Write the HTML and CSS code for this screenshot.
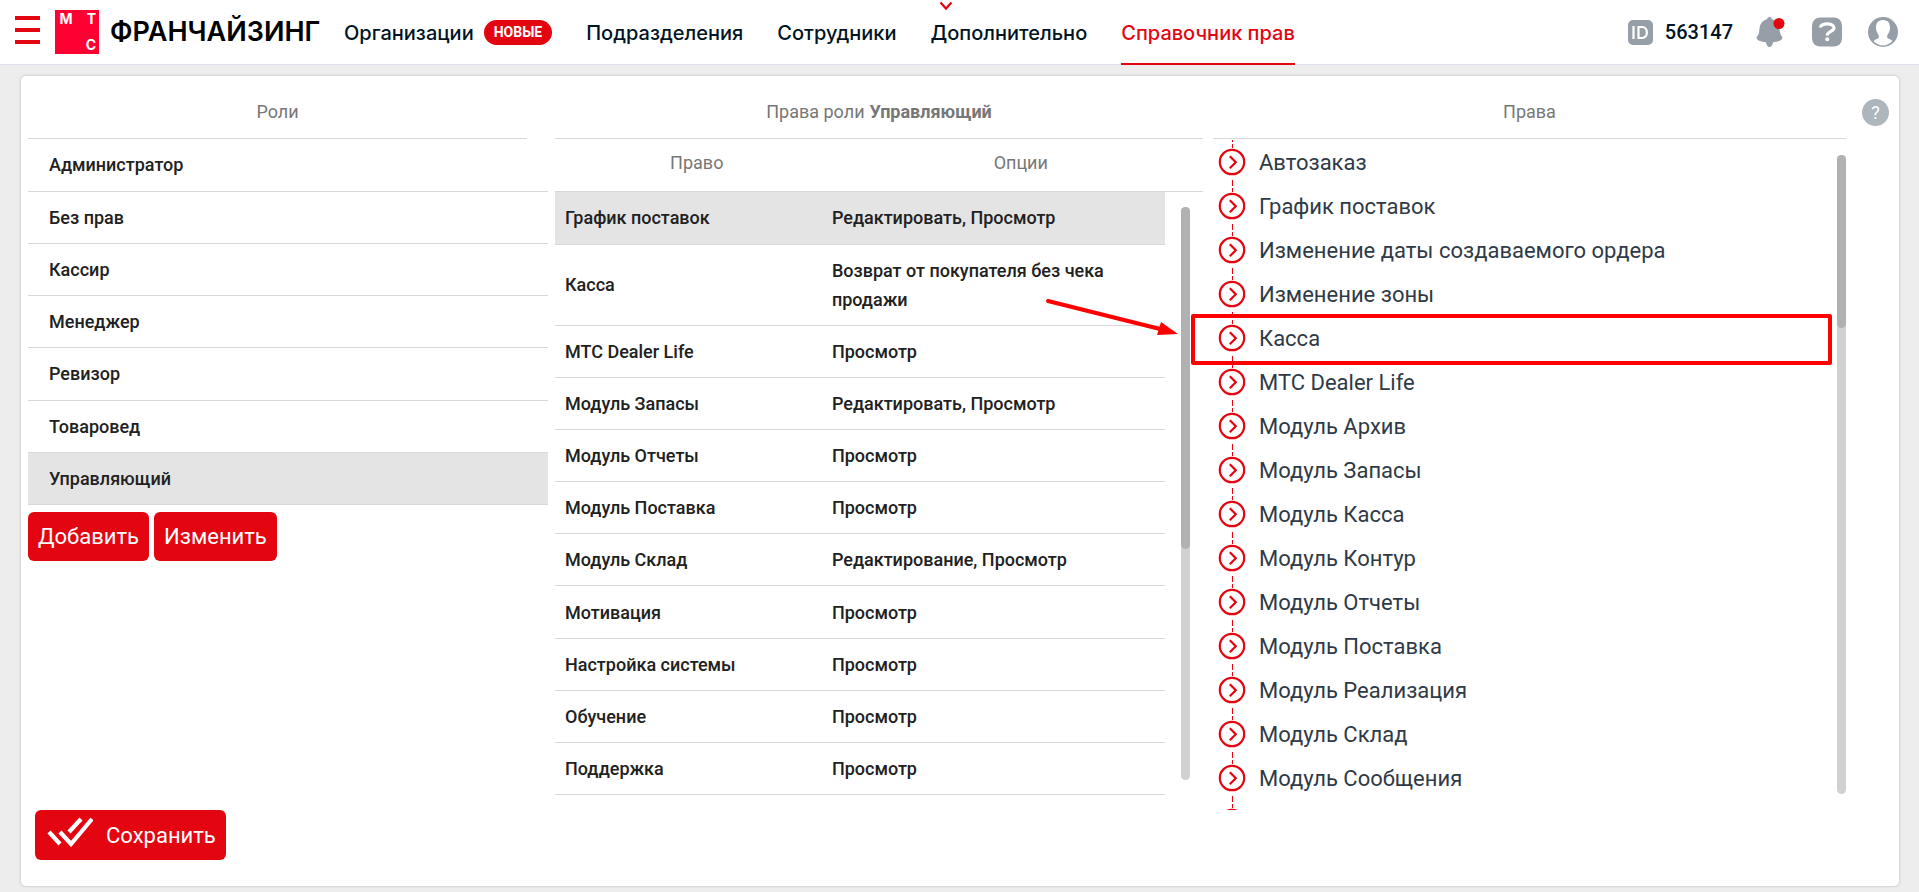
FILE: index.html
```html
<!DOCTYPE html>
<html lang="ru">
<head>
<meta charset="utf-8">
<title>Справочник прав</title>
<link rel="stylesheet" href="styles.css">
</head>
<body>
<svg class="sprite" width="0" height="0" aria-hidden="true">
  <symbol id="node" viewBox="0 0 28 44">
    <path fill="#e30611" d="M14 0h1v2h-1zM14 4h1v4h-1zM14 40h1v4h-1z"/>
    <circle cx="14" cy="22" r="12.2" fill="#fff" stroke="#e30611" stroke-width="2.2"/>
    <path d="M11.8 16.3l6 6-6 6" fill="none" stroke="#e30611" stroke-width="2.2"/>
  </symbol>
</svg>

<header class="topbar">
  <button class="menu" aria-label="Меню"><span></span><span></span><span></span></button>
  <a class="brand" href="#">
    <span class="logo"><span>М</span><span>Т</span><span></span><span>С</span></span>
    <span class="brand-name">ФРАНЧАЙЗИНГ</span>
  </a>
  <nav class="nav">
    <a href="#">Организации <span class="badge">НОВЫЕ</span></a>
    <a href="#">Подразделения</a>
    <a href="#">Сотрудники</a>
    <a href="#" class="more">Дополнительно
      <svg class="caret" width="14" height="10" viewBox="0 0 14 10"><path d="M1.5 1.5L7 7.5l5.500-6" fill="none" stroke="#e30611" stroke-width="2.200"/></svg>
    </a>
    <a href="#" class="current">Справочник прав</a>
  </nav>
  <div class="tools">
    <span class="user-id">
      <svg width="25" height="25" viewBox="0 0 25 25"><rect width="25" height="25" rx="5" fill="#969fa8"/><path d="M5.500 6v13M10.500 7h3.500c6.500 0 6.500 11 0 11h-3.500z" fill="none" stroke="#fff" stroke-width="2.200"/></svg>
      563147
    </span>
    <button aria-label="Уведомления">
      <svg width="30" height="30" viewBox="0 0 30 30"><path d="M13.500 0c1.500 0 2.400 1 2.400 2.300 4.600 1.200 7.100 4.700 7.600 9.200.4 4 .6 6 2.800 8.500.5 1.800-.8 3-2.600 3.700-2 .8-4.200 1.200-6.700 1.500-.2 2.500-1.500 4.800-3.500 4.800s-3.300-2.300-3.500-4.800c-2.500-.3-4.700-.7-6.700-1.500-1.800-.7-3.100-1.900-2.600-3.700 2.200-2.500 2.400-4.500 2.800-8.500.5-4.500 3-8 7.600-9.200C11.100 1 12 0 13.500 0z" fill="#969fa8"/><circle cx="23" cy="6.500" r="5.500" fill="#e30611"/></svg>
    </button>
    <button aria-label="Справка">
      <svg width="30" height="30" viewBox="0 0 30 30"><rect y="0.500" width="30" height="29" rx="8" fill="#969fa8"/><path d="M8.500 10.500c0-5 13.500-5 13.500.3 0 4.200-6.700 3-6.700 7.700" fill="none" stroke="#fff" stroke-width="3.200"/><circle cx="15.300" cy="22.300" r="2" fill="#fff"/></svg>
    </button>
    <button aria-label="Профиль">
      <svg width="30" height="30" viewBox="0 0 30 30"><circle cx="15" cy="15" r="15" fill="#969fa8"/><path d="M15 3c5 0 7.200 3.600 7 8-.1 3-1.200 5-2.400 6.700-.7 1.200-.7 3 .2 3.600 1.600 1 4 1.200 4.600 3C21.500 27 18.500 28.500 15 28.500S8.500 27 5.600 24.300c.6-1.800 3-2 4.600-3 .9-.6.900-2.400.2-3.600C9.200 16 8.100 14 8 11c-.2-4.400 2-8 7-8z" fill="#fff"/></svg>
    </button>
  </div>
</header>

<main class="card">
  <div class="columns">
    <section class="roles">
      <h2>Роли</h2>
      <table class="role-table">
        <tr><td>Администратор</td></tr>
        <tr><td>Без прав</td></tr>
        <tr><td>Кассир</td></tr>
        <tr><td>Менеджер</td></tr>
        <tr><td>Ревизор</td></tr>
        <tr><td>Товаровед</td></tr>
        <tr class="selected"><td>Управляющий</td></tr>
      </table>
      <div class="actions">
        <button class="btn">Добавить</button>
        <button class="btn">Изменить</button>
      </div>
    </section>

    <section class="role-rights">
      <h2>Права роли <b>Управляющий</b></h2>
      <div class="grid-head"><span>Право</span><span>Опции</span></div>
      <div class="grid-body">
        <table class="rights-table">
          <tr class="selected"><td>График поставок</td><td>Редактировать, Просмотр</td></tr>
          <tr><td>Касса</td><td>Возврат от покупателя без чека продажи</td></tr>
          <tr><td>МТС Dealer Life</td><td>Просмотр</td></tr>
          <tr><td>Модуль Запасы</td><td>Редактировать, Просмотр</td></tr>
          <tr><td>Модуль Отчеты</td><td>Просмотр</td></tr>
          <tr><td>Модуль Поставка</td><td>Просмотр</td></tr>
          <tr><td>Модуль Склад</td><td>Редактирование, Просмотр</td></tr>
          <tr><td>Мотивация</td><td>Просмотр</td></tr>
          <tr><td>Настройка системы</td><td>Просмотр</td></tr>
          <tr><td>Обучение</td><td>Просмотр</td></tr>
          <tr><td>Поддержка</td><td>Просмотр</td></tr>
        </table>
        <div class="scroll"><div class="thumb"></div></div>
      </div>
    </section>

    <section class="all-rights">
      <h2>Права</h2>
      <div class="tree-wrap">
        <ul class="tree">
          <li><svg><use href="#node"/></svg>Автозаказ</li>
          <li><svg><use href="#node"/></svg>График поставок</li>
          <li><svg><use href="#node"/></svg>Изменение даты создаваемого ордера</li>
          <li><svg><use href="#node"/></svg>Изменение зоны</li>
          <li><svg><use href="#node"/></svg>Касса</li>
          <li><svg><use href="#node"/></svg>МТС Dealer Life</li>
          <li><svg><use href="#node"/></svg>Модуль Архив</li>
          <li><svg><use href="#node"/></svg>Модуль Запасы</li>
          <li><svg><use href="#node"/></svg>Модуль Касса</li>
          <li><svg><use href="#node"/></svg>Модуль Контур</li>
          <li><svg><use href="#node"/></svg>Модуль Отчеты</li>
          <li><svg><use href="#node"/></svg>Модуль Поставка</li>
          <li><svg><use href="#node"/></svg>Модуль Реализация</li>
          <li><svg><use href="#node"/></svg>Модуль Склад</li>
          <li><svg><use href="#node"/></svg>Модуль Сообщения</li>
          <li><svg><use href="#node"/></svg></li>
        </ul>
        <div class="scroll"><div class="thumb"></div></div>
      </div>
      <div class="highlight"></div>
      <svg class="arrow" width="136" height="44" viewBox="0 0 136 44"><path d="M5 6l112 28" stroke="#f00" stroke-width="4" stroke-linecap="round"/><path d="M118 27l17 12-21 1z" fill="#f00"/></svg>
    </section>

    <button class="help" aria-label="Помощь">?</button>
  </div>
  <div class="footer">
    <button class="btn save">
      <svg width="48" height="30" viewBox="0 0 48 30"><path d="M4 15l11 12M15 15l11 12L47 2M24 15L36 2" fill="none" stroke="#fff" stroke-width="4.200"/></svg>
      Сохранить
    </button>
  </div>
</main>
</body>
</html>
```

FILE: styles.css
```css
* { box-sizing: border-box; }

body {
  margin: 0;
  background: #ededed;
  color: #212121;
  font-family: Roboto, "Liberation Sans", sans-serif;
  font-size: 18px;
}

button {
  border: 0;
  padding: 0;
  background: none;
  font: inherit;
  cursor: pointer;
}

a { color: inherit; text-decoration: none; }
svg { display: block; flex: none; }
.sprite { position: absolute; }

.topbar {
  display: flex;
  align-items: center;
  height: 65px;
  padding: 0 21px 0 15px;
  background: #fff;
  border-bottom: 1px solid #dde1ec;
}

.menu { display: grid; gap: 8px; margin-right: 15px; margin-bottom: 4px; }
.menu span { width: 25px; height: 4px; background: #e30611; }

.brand { display: flex; align-items: center; gap: 11px; width: 289px; }
.logo {
  display: grid;
  grid-template-columns: 1fr 1fr;
  align-content: space-between;
  justify-items: center;
  width: 44px;
  height: 44px;
  padding: 2px 0;
  background: #ff0032;
  color: #fff;
  font: 700 14px/14px Inter, sans-serif;
}
.logo span:nth-child(even) { justify-self: end; padding-right: 3px; }
.brand-name { color: #000; font: 600 27px/30px Inter, sans-serif; }

.nav {
  display: flex;
  align-self: stretch;
  gap: 34px;
  color: #001424;
  font-family: Inter, sans-serif;
  font-size: 20px;
  font-weight: 500;
}
.nav a { display: flex; align-items: center; height: 65px; white-space: nowrap; }
.badge {
  margin-left: 10px;
  padding: 0 10px;
  border-radius: 13px;
  background: #e30611;
  color: #fff;
  font-family: Roboto, sans-serif;
  font-size: 14px;
  font-weight: 700;
  line-height: 25px;
}
.more { position: relative; }
.caret { position: absolute; top: 1px; left: 8px; }
.nav .current { color: #e30611; border-bottom: 2px solid #e30611; padding-top: 2px; }

.tools { display: flex; align-items: center; gap: 26px; margin-left: auto; }
.user-id {
  display: flex;
  align-items: center;
  gap: 12px;
  margin-right: -3px;
  color: #001424;
  font-size: 20px;
  font-weight: 500;
}

.card {
  margin: 11px 20px 5px 21px;
  padding: 8px 10px 26px 7px;
  border-radius: 5px;
  background: #fff;
  box-shadow: 0 0 2px 1px #d2d3d5;
}
.columns {
  display: grid;
  grid-template-columns: 520fr 648fr 636fr 36px;
  column-gap: 7px;
}

h2 {
  display: flex;
  align-items: center;
  justify-content: center;
  gap: 5px;
  height: 55px;
  margin: 0;
  border-bottom: 1px solid #d8d8d8;
  color: #777;
  font-size: 18px;
  font-weight: 400;
}
.roles h2 { margin-right: 21px; }

table { width: 100%; border-collapse: collapse; font-weight: 500; }
td {
  height: 52px;
  padding: 11px 10px;
  border-bottom: 1px solid #d8d8d8;
  line-height: 29px;
}
.selected { background: #e4e4e4; }
.role-table { height: 366px; }
.role-table td { padding-left: 21px; }

.actions { display: flex; gap: 5px; margin-top: 7px; }
.btn {
  height: 49px;
  padding: 0 10px;
  border-radius: 6px;
  background: #e30611;
  color: #fff;
  font-size: 22px;
}

.grid-head {
  display: grid;
  grid-template-columns: 7fr 9fr;
  height: 53px;
  border-bottom: 1px solid #d8d8d8;
  color: #777;
  line-height: 48px;
  text-align: center;
}
.grid-body { display: flex; gap: 16px; padding-right: 13px; }
.rights-table { height: 603px; flex: 1; }
.rights-table td:first-child { width: 43.75%; }

.scroll { flex: none; width: 9px; border-radius: 5px; background: #d0d1d3; }
.thumb { border-radius: 5px; background: #b1b1b1; }
.grid-body .scroll { margin: 15px 0; }
.grid-body .thumb { height: 342px; }

.all-rights { position: relative; padding-left: 3px; }
.tree-wrap { display: flex; height: 671px; overflow: hidden; }
.tree {
  flex: 1;
  margin: 0;
  padding: 1px 0 0 5px;
  list-style: none;
  color: #2f3a47;
  font-size: 22px;
}
.tree li { display: flex; align-items: center; gap: 13px; height: 44px; }
.tree svg { width: 28px; height: 44px; }
.tree-wrap .scroll { margin: 16px 0; }
.tree-wrap .thumb { height: 173px; }

.highlight {
  position: absolute;
  top: 230px;
  left: -19px;
  right: 14px;
  height: 51px;
  border: 4px solid #f00;
  border-radius: 2px;
}
.arrow { position: absolute; top: 211px; left: -167px; }

.help {
  width: 27px;
  height: 27px;
  margin: 15px 0 0;
  justify-self: end;
  border-radius: 50%;
  background: #adb5bd;
  color: #fff;
  font-size: 18px;
}

.footer { padding-left: 7px; }
.save { display: flex; align-items: center; gap: 13px; height: 50px; }
.save svg { margin-bottom: 7px; }
```
